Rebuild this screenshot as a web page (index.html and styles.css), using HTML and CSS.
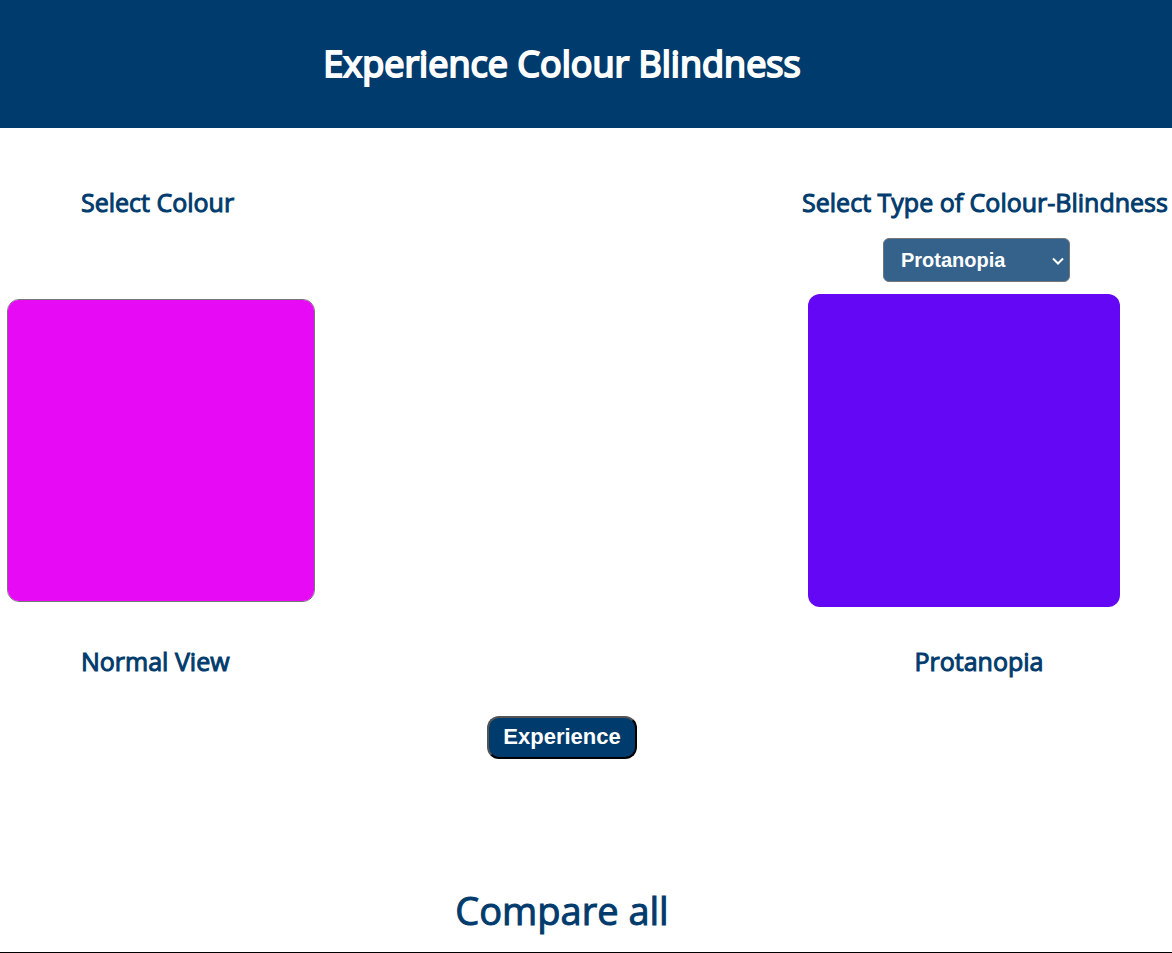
FILE: index.html
```html
<!DOCTYPE html>
<html lang="en">
<head>
  <meta charset="utf-8">
  <meta name="viewport" content="width=device-width, initial-scale=1">
  <title>Experience Colour Blindness</title>
  <link rel="stylesheet" href="styles.css">
</head>
<body>
  <header class="banner">
    <h1 class="banner-title">Experience Colour Blindness</h1>
  </header>
  <main>
    <form class="experience">
      <div class="views">
        <section class="view view-normal">
          <label class="label" for="colour">Select Colour</label>
          <input class="swatch-input" type="color" id="colour" value="#e60af5">
          <h2 class="label caption">Normal View</h2>
        </section>
        <section class="view view-simulated">
          <label class="label" for="type">Select Type of Colour-Blindness</label>
          <div class="select-wrap">
            <select class="type-select" id="type">
              <option>Protanopia</option>
              <option>Deuteranopia</option>
              <option>Tritanopia</option>
            </select>
            <svg class="chevron" viewBox="0 0 12 8" aria-hidden="true"><path d="M1 1.5 6 6.5 11 1.5"/></svg>
          </div>
          <div class="swatch"></div>
          <h2 class="label caption">Protanopia</h2>
        </section>
      </div>
      <button class="experience-button" type="button">Experience</button>
    </form>
    <section class="compare">
      <h2 class="compare-title">Compare all</h2>
    </section>
  </main>
</body>
</html>
```
FILE: styles.css
```css
* {
  box-sizing: border-box;
}

body {
  margin: 0;
  background: #fff;
  color: #003b6d;
  font-family: "Open Sans", sans-serif;
}

.banner {
  padding: 40px 48px 40px 0;
  background: #003b6d;
  color: #fff;
  text-align: center;
}

.banner-title {
  margin: 0;
  font-size: 36px;
  line-height: 48px;
  font-weight: 400;
  -webkit-text-stroke: 2px;
}

.experience {
  display: flex;
  flex-direction: column;
  align-items: center;
  padding-top: 55px;
}

.views {
  display: flex;
  justify-content: space-between;
  align-self: stretch;
}

.view {
  display: flex;
  flex-direction: column;
}

.view-normal {
  padding-left: 7px;
}

.view-normal .label {
  margin-left: 74px;
}

.view-simulated {
  width: 374px;
}

.view-simulated .label {
  text-align: center;
}

.label {
  margin-top: 0;
  margin-bottom: 0;
  font-size: 25px;
  line-height: 38px;
  font-weight: 400;
  -webkit-text-stroke: 1px;
}

.swatch-input {
  width: 308px;
  height: 303px;
  margin: 78px 0 0;
  padding: 0;
  border: 1px solid #767676;
  border-radius: 12px;
  background: none;
  appearance: none;
  overflow: hidden;
}

.swatch-input::-webkit-color-swatch-wrapper {
  padding: 0;
}

.swatch-input::-webkit-color-swatch {
  border: 0;
}

.select-wrap {
  position: relative;
  width: 187px;
  margin: 17px 0 12px 85px;
}

.type-select {
  display: block;
  width: 100%;
  height: 44px;
  padding: 0 17px;
  border: 1px solid #767676;
  border-radius: 6px;
  background: #35628a;
  color: #fff;
  font: bold 20px "Liberation Sans", sans-serif;
  appearance: none;
}

.chevron {
  position: absolute;
  top: 19px;
  right: 6px;
  width: 12px;
  height: 8px;
  fill: none;
  stroke: #fff;
  stroke-width: 2;
  pointer-events: none;
}

.swatch {
  width: 312px;
  height: 313px;
  margin-left: 10px;
  border-radius: 12px;
  background: #6407f5;
}

.view-normal .caption {
  margin-top: 40px;
}

.view-simulated .caption {
  margin-top: 35px;
  margin-right: 12px;
}

.experience-button {
  margin: 36px 48px 0 0;
  padding: 0 14px 2px;
  height: 43px;
  border: 2px outset #000;
  border-radius: 12px;
  background: #003b6d;
  color: #fff;
  font: bold 22px "Liberation Sans", sans-serif;
}

.compare {
  padding-top: 123px;
  border-bottom: 1px solid #000;
}

.compare-title {
  margin: 0 48px 14px 0;
  font-size: 38px;
  line-height: 56px;
  font-weight: 400;
  text-align: center;
  -webkit-text-stroke: 1px;
}
```
